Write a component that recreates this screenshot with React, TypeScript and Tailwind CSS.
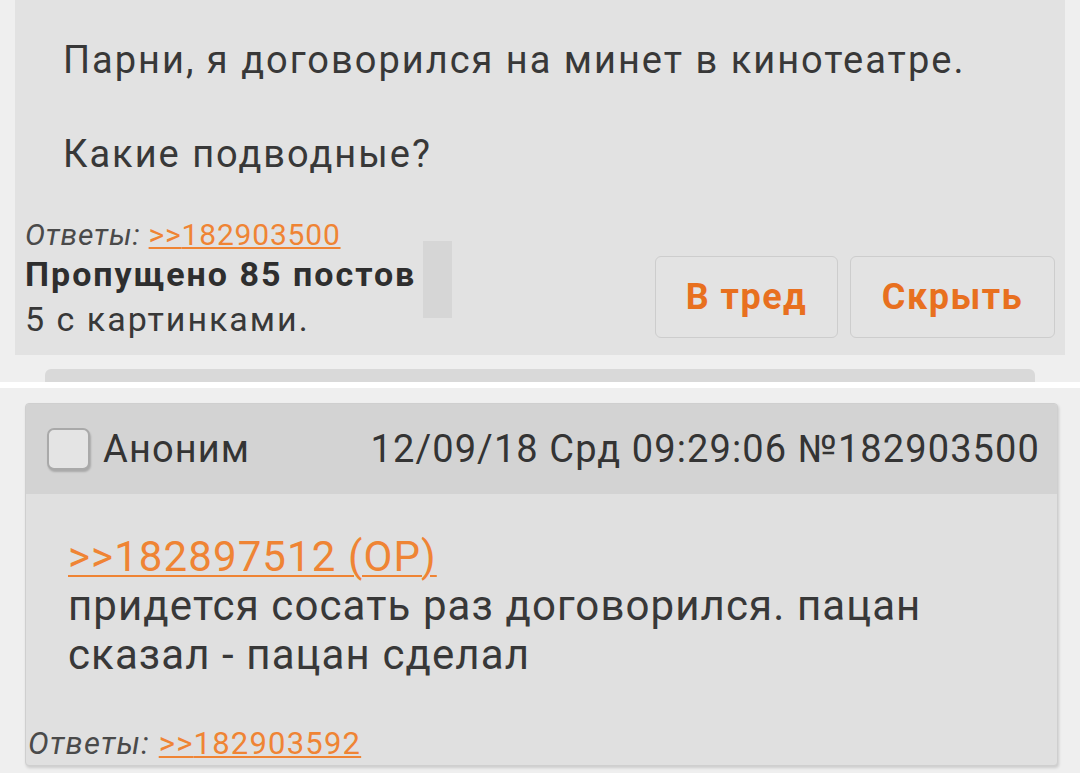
import React from "react";

const font = { fontFamily: "Roboto, 'Noto Sans', sans-serif" };

function ReplyLine({ num, className }: { num: string; className: string }) {
  return (
    <div className={className}>
      <span className="italic text-[#4a4a4a]">Ответы: </span>
      <span className="text-[#ef8434] underline decoration-[1.5px] underline-offset-2">&gt;&gt;{num}</span>
    </div>
  );
}

function ActionButton({ label, width }: { label: string; width: string }) {
  return (
    <button
      className={`${width} h-[82px] rounded-[6px] border border-[#cdcdcd] bg-[#e3e3e3] text-[36px] font-bold text-[#e8701f] tracking-[1.5px]`}
    >
      {label}
    </button>
  );
}

export default function App() {
  return (
    <div className="w-[1080px] h-[773px] overflow-hidden bg-[#efefef] text-[#383838] flex flex-col" style={font}>
      {/* OP post preview */}
      <div className="px-[15px]">
        <div className="h-[355px] bg-[#e2e2e2] flex flex-col">
          <div className="pl-[48px] pt-[37px] text-[38px] leading-[47px] tracking-[2px]">
            <p>Парни, я договорился на минет в кинотеатре.</p>
            <p>&nbsp;</p>
            <p>Какие подводные?</p>
          </div>

          <div className="mt-[39px] pl-[10px] pr-[10px] flex">
            <div className="w-[398px] flex flex-col">
              <ReplyLine num="182903500" className="text-[30px] leading-[36px] tracking-[0.8px]" />
              <div className="text-[34px] leading-[42px] font-bold text-[#2e2e2e] tracking-[2px] whitespace-nowrap">
                Пропущено 85 постов
              </div>
              <div className="text-[34px] leading-[48px] tracking-[2px]">5 с картинками.</div>
            </div>
            <div className="w-[29px] h-[77px] mt-[24px] bg-[#d6d6d6]" />
            <div className="ml-auto mt-[39px] flex gap-[12px] self-start">
              <ActionButton label="В тред" width="w-[183px]" />
              <ActionButton label="Скрыть" width="w-[205px]" />
            </div>
          </div>
        </div>
      </div>

      {/* thread separator */}
      <div className="mt-[14px] pl-[45px] pr-[45px]">
        <div className="h-[13px] bg-[#d9d9d9] rounded-t-[6px]" />
      </div>
      <div className="h-[6px] bg-white" />

      {/* reply post */}
      <div className="pt-[15px] pl-[25px]">
        <div className="w-[1033px] h-[363px] bg-[#e0e0e0] border border-[#cfcfcf] rounded-[4px] shadow-[1px_2px_3px_rgba(0,0,0,0.15)] flex flex-col overflow-hidden">
          <div className="h-[90px] bg-[#d3d3d3] flex items-center pl-[21px] pr-[17px] text-[38px] text-[#343434] tracking-[1.1px]">
            <div className="w-[43px] h-[42px] rounded-[7px] border-2 border-[#a9a9a9] bg-[#e4e4e4] shadow-[1px_2px_2px_rgba(0,0,0,0.2)]" />
            <span className="ml-[13px]">Аноним</span>
            <span className="ml-auto">12/09/18 Срд 09:29:06 №182903500</span>
          </div>
          <div className="pl-[42px] pt-[38px] text-[42px] leading-[49px] tracking-[1.1px]">
            <div className="text-[#ef8434] underline decoration-2 underline-offset-4">&gt;&gt;182897512 (OP)</div>
            <div>придется сосать раз договорился. пацан</div>
            <div>сказал - пацан сделал</div>
          </div>
          <ReplyLine num="182903592" className="mt-auto mb-[3px] pl-[2px] text-[31px] leading-[36px] tracking-[1.2px]" />
        </div>
      </div>
    </div>
  );
}
